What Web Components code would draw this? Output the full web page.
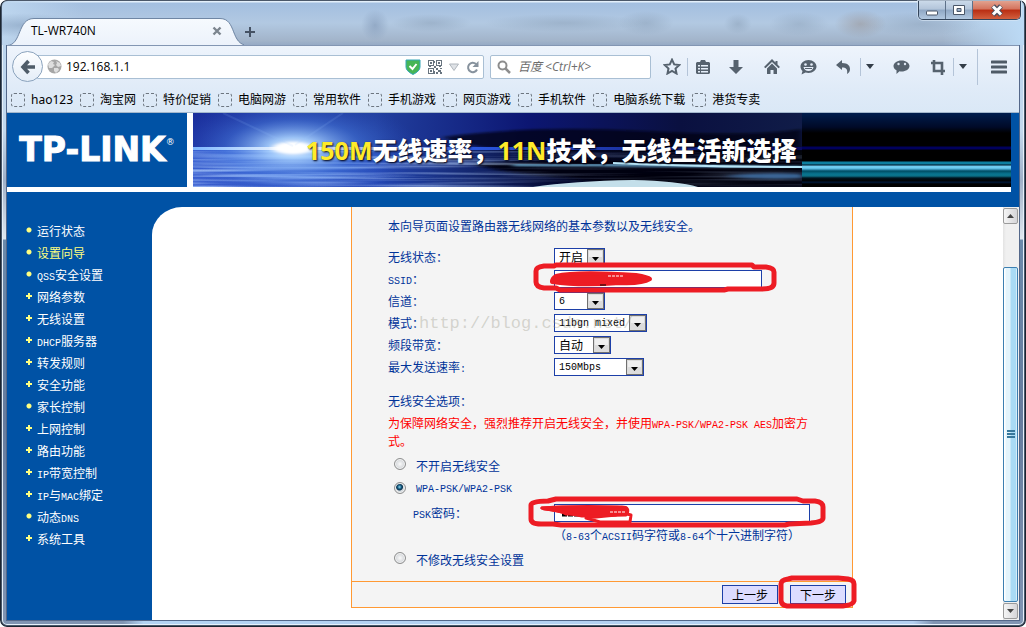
<!DOCTYPE html>
<html lang="zh-CN">
<head>
<meta charset="utf-8">
<title>TL-WR740N</title>
<style>
body{margin:0;font-family:"Noto Sans","Noto Sans CJK SC",sans-serif;font-size:12px;color:#000}
</style>
</head>
<body>
<browser-window>
  <window-titlebar slot="title"><browser-tab>TL-WR740N</browser-tab></window-titlebar>
  <nav-toolbar></nav-toolbar>
  <bookmark-bar></bookmark-bar>
  <router-banner></router-banner>
  <router-page>
    <router-menu slot="menu"></router-menu>
    <wizard-form></wizard-form>
    <scroll-rail slot="rail"></scroll-rail>
  </router-page>
</browser-window>
<script>
const define = (name, html) => {
  const t = document.createElement('template');
  t.innerHTML = '<style>*,::before{box-sizing:border-box}button{font:inherit;border:0;padding:0;margin:0;background:none;color:inherit}svg{display:block}</style>' + html;
  customElements.define(name, class extends HTMLElement {
    constructor() {
      super();
      this.attachShadow({mode: 'open'}).append(t.content.cloneNode(true));
    }
  });
};

define('browser-window', `
<style>
:host{display:flex;flex-direction:column;min-height:100vh;box-sizing:border-box;padding-bottom:7px;
 background:linear-gradient(90deg,#8195b3 12%,#b4d3f3 14%,#b4d0f0 89%,#8195b3 91%) bottom/100% 7px no-repeat,
 linear-gradient(#b5d1ee 0,#c3d9ee 130px,#9fb0c8 180px,#dfe8f0 239px,#6b8aab 240px,#667c9e 420px,#8195b3);
 box-shadow:inset 0 0 0 1px #1c2530,inset 0 0 0 2px #47566a,inset 0 0 0 3px #e6f1fa;border-radius:7px}
.inner{flex:1;display:flex;flex-direction:column;margin:0 7px;outline:1px solid #54688a}
</style>
<slot name="title"></slot><div class="inner"><slot></slot></div>`);

define('window-titlebar', `
<style>
:host{display:flex;position:relative;height:45px;box-sizing:border-box;padding-left:6px;padding-right:3px;margin:0 2px;border-radius:6px 6px 0 0;
 border-top:1px solid #4b586a;
 background:radial-gradient(ellipse 60px 12px at 2% 55%,#8ba5c3aa,transparent),
 radial-gradient(ellipse 14px 16px at 36.5% 55%,#8097b699,transparent),
 radial-gradient(ellipse 40px 9px at 42% 50%,#8ba0b888,transparent),
 radial-gradient(ellipse 80px 9px at 55% 50%,#8ba0b888,transparent),
 radial-gradient(ellipse 28px 12px at 63% 50%,#8ba0b888,transparent),
 radial-gradient(ellipse 14px 10px at 72% 52%,#8ba0b888,transparent),
 radial-gradient(ellipse 30px 12px at 78% 52%,#8ba0b877,transparent),
 radial-gradient(ellipse 26px 14px at 84% 52%,#958f9088,transparent),
 radial-gradient(ellipse 60px 12px at 90% 52%,#8ba0b888,transparent),
 linear-gradient(90deg,#bcd5ee,transparent 8% 92%,#bcdaf5),
 linear-gradient(#e3effa 0 1px,#a3bfe0 2px,#b2c9e2 50%,#a2b4ca 90%,#96aac5)}
.new{width:14px;height:14px;margin:24px 0 0;}
.ctl{display:flex;height:19px;margin-left:auto;border:1px solid #33445a;border-top:0;border-radius:0 0 5px 5px;overflow:hidden;box-shadow:0 0 0 1px #d7e6f4aa}
.ctl button{width:27px;display:grid;place-items:center;border-right:1px solid #5e7189;background:linear-gradient(#cbdaea,#b3c5da 45%,#8fa7c4 50%,#b2c8e0)}
.ctl button:last-child{width:47px;border:0;background:linear-gradient(#e2a28f,#d4735d 45%,#b92d12 50%,#d2603f)}
</style>
<slot></slot>
<button class="new" aria-label="新标签"><svg width="12" height="12" viewBox="0 0 12 12"><path d="M6 1v10M1 6h10" stroke="#455264" stroke-width="2"/></svg></button>
<div class="ctl">
<button aria-label="最小化"><svg width="14" height="13"><rect x="1.500" y="7" width="11" height="4" rx="1" fill="#fff" stroke="#4a5668"/></svg></button>
<button aria-label="最大化"><svg width="14" height="13"><path fill-rule="evenodd" d="M1.500 1.500h11v9h-11zM5 4.500v3h4v-3z" fill="#fff" stroke="#4a5668"/></svg></button>
<button aria-label="关闭"><svg width="14" height="13"><path d="M3 2l8 9M11 2l-8 9" stroke="#4a4f5e" stroke-width="5"/><path d="M3 2.500l8 8M11 2.500l-8 8" stroke="#fff" stroke-width="3"/></svg></button>
</div>`);

define('browser-tab', `
<style>
:host{display:flex;position:relative;flex:none;width:236px;height:28px;margin-top:16px;align-items:center;box-sizing:border-box;padding:0 22px 0 23px}
.shape{position:absolute;left:0;top:0}
span{position:relative;flex:1;line-height:18px;font-family:"Open Sans","Noto Sans",sans-serif}
button{position:relative;width:10px;height:10px}
</style>
<svg class="shape" width="236" height="28"><defs><linearGradient id="g" x2="0" y2="1"><stop stop-color="#f6fafe"/><stop offset="1" stop-color="#ecf2fb"/></linearGradient></defs>
<path d="M-1 28.500C14 28 9 1.500 26 1.500H212C229 1.500 222 28 240 28.500" fill="url(#g)" stroke="#6f86a4"/></svg>
<span><slot></slot></span>
<button aria-label="关闭标签"><svg width="10" height="10"><path d="M1.500 1.500l7 7M8.500 1.500l-7 7" stroke="#7c858f" stroke-width="2.400"/></svg></button>`);

define('nav-toolbar', `
<style>
:host{display:flex;align-items:center;height:42px;box-sizing:border-box;padding:0 0 0 5px;background:linear-gradient(#eef4fc,#e0ebf8);border-top:1px solid #8396b3}
.back{position:relative;z-index:1;flex:none;width:31px;height:31px;border:1px solid #8ba3bd;border-radius:50%;display:grid;place-items:center;background:linear-gradient(#fdfeff,#e4edf7)}
.url{flex:1;min-width:0;display:flex;align-items:center;height:24px;margin-left:-6px;padding:0 3px 0 9px;border:1px solid #a9bfd4;border-radius:0 2px 2px 0;background:#fff}
input{min-width:0;border:0;outline:0;padding:0;background:none;font:12px/18px "Open Sans","Noto Sans","Noto Sans CJK SC",sans-serif;color:#000}
.url input{flex:1;margin-left:4px}
.url svg{flex:none}
.st{display:flex;align-items:center;gap:7px}
.find{flex:none;width:161px;height:24px;margin:0 6px;display:flex;align-items:center;gap:7px;padding:0 6px;border:1px solid #a9bfd4;border-radius:2px;background:#fff}
.find input{flex:1;font-style:italic}
.find input::placeholder{color:#6d6d6d;opacity:1}
button.i{flex:none;width:36px;height:24px;display:grid;place-items:center;color:#56626e}
button.n{width:30px}
button.d{width:18px}
.bub{margin:0 4px}
i{flex:none;width:1px;height:18px;background:#b4c4d8}
i.tall{height:36px;margin-left:5px}
button.menu{width:41px}
</style>
<button class="back" aria-label="后退"><svg width="16" height="16" viewBox="0 0 16 16"><path d="M8.500 2L3 8l5.500 6M3 8h12" fill="none" stroke="#4f5c68" stroke-width="3.600"/></svg></button>
<div class="url">
<svg width="15" height="15" viewBox="0 0 15 15"><circle cx="7.500" cy="7.500" r="7" fill="#a6a6a6"/><path d="M1 5l3-3 3 1-1 2 2 1-3 3H2zM9 2l4 2 1 3-3 1-2-2 1-2zM7 9l4 0 1 2-3 3-2-2z" fill="#dedede"/></svg>
<input aria-label="地址" value="192.168.1.1">
<div class="st">
<svg width="16" height="16" viewBox="0 0 16 16"><path d="M1 1h14v7q0 4-7 7.500Q1 12 1 8z" fill="#46b556" stroke="#35a6b8"/><path d="M4.500 7l3 3 4-5" fill="none" stroke="#fff" stroke-width="2"/></svg>
<svg width="14" height="14" viewBox="0 0 14 14" fill="#68747f"><path fill-rule="evenodd" d="M0 0h6v6H0zM1 1v4h4V1zM8 0h6v6H8zM9 1v4h4V1zM0 8h6v6H0zM1 9v4h4V9z"/><path d="M2 2h2v2H2zM10 2h2v2h-2zM2 10h2v2H2zM8 8h2v2H8zM12 8h2v1h-2zM10 10h3v2h-3zM8 12h2v2H8zM12 12h2v2h-2zM6 6h2v2H6zM6 1h1v2H6zM6 11h1v3H6zM1 6h2v1H1zM11 6h2v1h-2z"/></svg>
<svg width="10" height="8"><path d="M0.500 1h9L5 7.500z" fill="#dfe2e6" stroke="#b0b6bd"/></svg>
<svg width="14" height="14" viewBox="0 0 14 14"><path d="M11 9.500A4.700 4.700 0 1 1 10 4" fill="none" stroke="#87929d" stroke-width="2"/><path d="M12.500 1v6h-6z" fill="#87929d"/></svg>
</div></div>
<div class="find"><svg width="14" height="14" viewBox="0 0 14 14"><circle cx="5.500" cy="5.500" r="4" fill="none" stroke="#8d8d8d" stroke-width="2"/><path d="M8.500 8.500l4.500 4.500" stroke="#8d8d8d" stroke-width="2.500"/></svg><input aria-label="搜索" placeholder="百度 &lt;Ctrl+K&gt;"></div>
<button class="i n" aria-label="收藏"><svg width="18" height="17" viewBox="0 0 18 17"><path d="M9 1.700l2.200 4.700 5.100.6-3.800 3.500 1 5-4.500-2.500-4.500 2.500 1-5L1.700 7l5.100-.6z" fill="none" stroke="currentColor" stroke-width="2"/></svg></button><i></i>
<button class="i n" aria-label="书签"><svg width="16" height="16" viewBox="0 0 16 16"><path fill-rule="evenodd" fill="currentColor" d="M2 3h3l1-2h4l1 2h3l1 1v10l-1 1H2l-1-1V4zM3 6v1.500h2V6zM6 6v1.500h7V6zM3 9v1.500h2V9zM6 9v1.500h7V9zM3 12v1.500h2V12zM6 12v1.500h7V12z"/></svg></button>
<button class="i" aria-label="下载"><svg width="16" height="16" viewBox="0 0 16 16"><path d="M5.500 1h5v7H15l-7 7-7-7h4.500z" fill="currentColor"/></svg></button>
<button class="i" aria-label="主页"><svg width="16" height="16" viewBox="0 0 16 16" fill="currentColor"><path d="M8 0L0 8l1.500 1.300L8 3l6.500 6.300L16 8l-2.500-2.500V2h-2v1.500z"/><path d="M8 4.500L3 9.500V15h3.500v-4h3v4H13V9.500z"/></svg></button>
<button class="i" aria-label="表情"><svg width="17" height="16" viewBox="0 0 17 16"><path d="M8.500 1C13 1 16.500 4 16.500 7.500S13 14 8.500 14l-3-.5-4 2 1-3.500C1 10.500.5 9 .5 7.500.5 4 4 1 8.500 1z" fill="currentColor"/><circle cx="5.500" cy="5.500" r="1.300" fill="#e6eef9"/><circle cx="11.500" cy="5.500" r="1.300" fill="#e6eef9"/><path d="M3.500 8h10q-1 4-5 4t-5-4z" fill="#e6eef9"/><path d="M5 9.500h7" stroke="currentColor"/></svg></button>
<button class="i" style="width:34px" aria-label="撤销"><svg width="16" height="16" viewBox="0 0 16 16"><path d="M1 6l6-5v3c6 0 8 3 8 6 0 2-1 4-3 5 1-5-1-6.500-5-6.500V11z" fill="currentColor"/></svg></button><i></i>
<button class="i d" aria-label="撤销选项"><svg width="8" height="5"><path d="M0 0h8L4 5z" fill="#333d48"/></svg></button>
<button class="i bub" aria-label="消息"><svg width="17" height="16" viewBox="0 0 17 16"><path d="M8.500 1.500C13 1.500 16.500 4 16.500 7S13 12.500 8.500 12.500q-1 0-2-.2L3.500 15V11.300C1.500 10.300.5 8.800.5 7 .5 4 4 1.500 8.500 1.500z" fill="currentColor"/><circle cx="5.500" cy="5" r="1.200" fill="#dfe8f3"/><circle cx="12" cy="5" r="1.200" fill="#dfe8f3"/></svg></button>
<button class="i n" aria-label="截图"><svg width="16" height="16" viewBox="0 0 16 16"><path d="M1 4h11v12M4 1v11h11" fill="none" stroke="currentColor" stroke-width="2.600"/></svg></button><i></i>
<button class="i d" aria-label="截图选项"><svg width="8" height="5"><path d="M0 0h8L4 5z" fill="#333d48"/></svg></button><i class="tall"></i>
<button class="i menu" aria-label="菜单"><svg width="16" height="14"><path d="M1 2h14M1 7h14M1 12h14" stroke="#4f5b67" stroke-width="3" stroke-linecap="round"/></svg></button>`);

define('bookmark-bar', `
<style>
:host{display:flex;align-items:center;gap:7px;height:26px;box-sizing:border-box;padding:0 4px;background:linear-gradient(#e0ebf8,#dae8f6);border-bottom:1px solid #a3b7cc;white-space:nowrap}
a{display:flex;align-items:center;gap:6px;color:#000;text-decoration:none;line-height:20px}
a::before{content:"";width:14px;height:14px;border:1px dashed #6d7680;border-radius:3px}
</style>
<a href="#">hao123</a><a href="#">淘宝网</a><a href="#">特价促销</a><a href="#">电脑网游</a><a href="#">常用软件</a><a href="#">手机游戏</a><a href="#">网页游戏</a><a href="#">手机软件</a><a href="#">电脑系统下载</a><a href="#">港货专卖</a>`);

define('router-banner', `
<style>
:host{display:flex;background:#fff;border-right:8px solid #0052a5}
.logo{flex:none;width:180px;height:74px;display:flex;align-items:center;justify-content:center;background:#0052a5;color:#fff;font:bold 33px/40px "DejaVu Sans",sans-serif}
.logo b{-webkit-text-stroke:1px #fff}
sup{font-size:9px;line-height:10px;align-self:flex-start;margin-top:24px;font-weight:normal}
.ad{flex:1;position:relative;height:74px;margin:0 0 5px 6px;padding-left:113px;overflow:hidden;
background:linear-gradient(#001d4d 0,#000a28 14px,#000 20px 33px,#00005c 34px 36px,#000 37px 48px,#0d7f9f 49px 51px,#012 52px,#6fcdf0 53px 55px,#49a9d0 56px,#004c63 58px,#087590 61px,#0b6f86 63px,#001520 65px,#000 68px,#001a3d 69px,#000 71px)}
.ad svg{position:absolute;left:0;top:0}
p{position:relative;margin:0;white-space:nowrap;font:900 25px/72px "Noto Sans CJK SC",sans-serif;color:#fff;text-shadow:1px 1px 2px #001}
em{font:bold 25px/72px "Open Sans",sans-serif;color:#ffeb2a}
</style>
<div class="logo"><b>TP-LINK</b><sup>®</sup></div>
<div class="ad">
<svg width="609" height="74" viewBox="0 0 609 74"><defs>
<linearGradient id="s"><stop stop-color="#1b2f9c"/><stop offset=".3" stop-color="#22409f"/><stop offset=".55" stop-color="#0c1672"/><stop offset=".8" stop-color="#0a1040"/><stop offset="1" stop-color="#101c48"/></linearGradient>
<linearGradient id="w"><stop stop-color="#3a5fd0"/><stop offset=".3" stop-color="#2447b4"/><stop offset=".6" stop-color="#050a30"/><stop offset="1" stop-color="#02040c"/></linearGradient>
<radialGradient id="f"><stop stop-color="#fff"/><stop offset=".2" stop-color="#a9d2ff" stop-opacity=".9"/><stop offset=".55" stop-color="#4d84e8" stop-opacity=".45"/><stop offset="1" stop-color="#2b51c4" stop-opacity="0"/></radialGradient>
<linearGradient id="l"><stop stop-color="#7fb8ff"/><stop offset=".17" stop-color="#fff"/><stop offset=".45" stop-color="#2b58e0"/><stop offset="1" stop-color="#0a0a60"/></linearGradient>
<linearGradient id="v"><stop stop-color="#fff"/><stop offset=".3" stop-color="#bbb"/><stop offset=".6" stop-color="#444"/><stop offset="1" stop-color="#333"/></linearGradient>
<mask id="k"><rect width="609" height="74" fill="url(#v)"/></mask>
<filter id="b" x="-10%" width="120%" y="-50%" height="200%"><feGaussianBlur stdDeviation="3 1"/></filter>
<filter id="r" x="0" width="100%" y="0" height="100%"><feTurbulence type="fractalNoise" baseFrequency=".006 .3" numOctaves="2" seed="4"/><feColorMatrix values="0 0 0 0 .5  0 0 0 0 .68  0 0 0 0 1  2.600 0 0 0 -1.050"/></filter>
</defs>
<rect width="609" height="74" fill="url(#s)"/>
<rect y="36" width="609" height="38" fill="url(#w)"/>
<g filter="url(#b)" fill="#00020e">
<path d="M250 24q90-12 200-6t159-2v22H330q-60-4-80-14z" opacity=".75"/>
<path d="M280 51q120-8 329-3v12q-70 4-120 10t-120-6q-60-4-89-13z" opacity=".9"/>
<path d="M420 64q90-9 189-8v18H440z"/>
</g>
<g mask="url(#k)"><rect y="38" width="609" height="36" filter="url(#r)"/></g>
<ellipse cx="100" cy="35" rx="125" ry="52" fill="url(#f)"/>
<rect y="34" width="609" height="3" fill="url(#l)"/>
<ellipse cx="100" cy="35" rx="20" ry="6" fill="#fff" filter="url(#b)"/>
<path d="M30 0l70 33M150 0l-48 32" stroke="#9cc6ff" opacity=".12" stroke-width="2"/>
<path d="M320 52h80l209 2" stroke="#6db4dd" stroke-width="2" fill="none" filter="url(#b)"/>
<path d="M420 50q90 4 189 4" stroke="#b6e4f7" stroke-width="2" fill="none"/>
<path d="M340 74q40-6 100-7 45 1 65 7z" fill="#c4dfea"/>
<path d="M530 63q40-4 79-2v4q-40 2-79-2z" fill="#3a6595" filter="url(#b)"/>
</svg>
<p><em>150M</em>无线速率，<em>11N</em>技术，无线生活新选择</p>
</div>`);

define('router-page', `
<style>
:host{flex:1;display:flex;background:#0052a5;padding-top:15px}
main{flex:1;display:flex;align-items:flex-start;justify-content:flex-end;background:#fff;border-top-left-radius:30px 28px;padding:0 150px 12px 20px}
</style>
<slot name="menu"></slot><main><slot></slot></main><slot name="rail"></slot>`);

define('router-menu', `
<style>
:host{flex:none;width:145px;box-sizing:border-box;padding:13px 0 0 19px;font-family:"Noto Sans CJK SC",sans-serif}
ul{list-style:none;margin:0;padding:0}
li{display:flex;align-items:center;height:22px;gap:5px}
li::before{content:"";flex:none;width:6px;height:6px;margin-bottom:3px;background:linear-gradient(#ffff80,#ffff80) center/6px 2px no-repeat,linear-gradient(#ffff80,#ffff80) center/2px 6px no-repeat}
li.dot::before{background:radial-gradient(#ffff80 2px,transparent 3px)}
a{color:#fff;text-decoration:none;line-height:22px;white-space:nowrap}
a.on{color:#ffff80}
span{font:10px/10px "Liberation Mono",monospace}
</style>
<ul>
<li class="dot"><a href="#">运行状态</a></li><li class="dot"><a class="on" href="#">设置向导</a></li><li class="dot"><a href="#"><span>QSS</span>安全设置</a></li>
<li><a href="#">网络参数</a></li><li><a href="#">无线设置</a></li><li><a href="#"><span>DHCP</span>服务器</a></li><li><a href="#">转发规则</a></li><li><a href="#">安全功能</a></li>
<li class="dot"><a href="#">家长控制</a></li><li><a href="#">上网控制</a></li><li><a href="#">路由功能</a></li><li><a href="#"><span>IP</span>带宽控制</a></li><li><a href="#"><span>IP</span>与<span>MAC</span>绑定</a></li>
<li class="dot"><a href="#">动态<span>DNS</span></a></li><li><a href="#">系统工具</a></li>
</ul>`);

define('wizard-form', `
<style>
:host{display:block;position:relative;flex:none;width:502px;box-sizing:border-box;background:#f4f4f4;border:1px solid #ff9933;border-top:0;color:#003399;font:12px/22px "Noto Sans CJK SC",sans-serif}
.body{padding:8px 36px 9px}
p{margin:0}
.m{font-family:"Liberation Mono",monospace;font-size:10px}
span.m{line-height:10px}
.grid{display:grid;grid-template-columns:166px 1fr;grid-auto-rows:22px;margin-top:9px}
.cell{position:relative;display:flex;align-items:center}
select,input.t{height:18px;border:1px solid #1c3fa8;border-radius:0;background:#fff;color:#000;margin:0;padding:0 4px;font:12px/16px "Noto Sans CJK SC",sans-serif}
select.m{padding-top:2px;font:10px/14px "Liberation Mono",monospace}
select{appearance:none;width:51px;background:#fff url("data:image/svg+xml,%3Csvg xmlns='http://www.w3.org/2000/svg' width='17' height='16'%3E%3Crect x='.5' y='.5' width='16' height='15' fill='%23dcdcdc' stroke='%23707070'/%3E%3Cpath d='M2 2h13v6H2z' fill='%23efefef'/%3E%3Cpath d='M5 8h7l-3.500 4z'/%3E%3C/svg%3E") right center no-repeat}
select.w93{width:93px}select.w57{width:57px}select.w90{width:90px}
.ssid{width:208px}.psk{width:256px}
h3{margin:12px 0 0;font:inherit}
.warn{color:#f00;line-height:18px;margin-top:2px;width:424px}
.opts{margin-top:4px}
.r{display:flex;align-items:center;height:24px;padding-left:6px;gap:10px}
.r.last{margin-top:2px}
.r label{line-height:24px}
.r input{appearance:none;width:12px;height:12px;margin:0 0 4px;border:1px solid #8e8f8f;border-radius:50%;background:radial-gradient(#fafafa,#cfd2d6 5px);box-shadow:inset 0 0 0 1px #f4f4f4}
.r input:checked{background:radial-gradient(circle at 45% 40%,#8fdcf5 0,#14577c 2px,#0b3350 3px,#d5dade 4px)}
.opts .grid{margin:0}
.opts .grid label{padding-left:25px}
.hint{grid-column:2;white-space:nowrap}
footer{display:flex;justify-content:flex-end;gap:12px;height:26px;padding:3px 6px;border-top:1px solid #ff9933}
footer button{width:56px;height:19px;border:1px solid #1c3fa8;background:#dcdcff;color:#000;font:12px/17px "Noto Sans CJK SC",sans-serif}
.next{position:relative;display:block;height:19px}
.next button{display:block}
.mark{position:absolute;pointer-events:none;z-index:2;fill:none;stroke:#ed1c24;stroke-width:5;stroke-linejoin:round}
.mark1{left:-22px;top:-6px}.mark2{left:-28px;top:-6px}.mark3{left:-12px;top:-10px}
.wm{position:absolute;left:67px;top:105px;font:17px/24px "Liberation Mono",monospace;color:#8f8f7c55;pointer-events:none}
</style>
<form class="body" id="f">
<p>本向导页面设置路由器无线网络的基本参数以及无线安全。</p>
<div class="grid">
<label for="st">无线状态：</label><div class="cell"><select id="st"><option>开启</option></select></div>
<label for="ss"><span class="m">SSID</span>：</label><div class="cell"><input class="t ssid" id="ss" type="text">
<svg class="mark mark1" width="246" height="32"><path d="M12 4Q4 5 4 9v11q0 5 8 6h12l4 2h164l4-1h34q12 0 12-6V10q0-4-8-5h-12l-2-2H24l-2 1z"/><path d="M24 14q20-5 80-1 12 2 14 4-8 5-30 4-40 3-68-1 0-4 4-6z" fill="#ed1c24" stroke-width="4"/><path d="M68 23h6" stroke="#000" stroke-width="1"/><path d="M76 14h16" stroke="#fff" stroke-width="1" stroke-dasharray="3 1"/></svg></div>
<label for="ch">信道：</label><div class="cell"><select id="ch" class="m"><option>6</option></select></div>
<label for="mo">模式：</label><div class="cell"><select id="mo" class="m w93"><option>11bgn mixed</option></select></div>
<label for="bw">频段带宽：</label><div class="cell"><select id="bw" class="w57"><option>自动</option></select></div>
<label for="sp">最大发送速率<span class="m">:</span></label><div class="cell"><select id="sp" class="m w90"><option>150Mbps</option></select></div>
</div>
<h3>无线安全选项：</h3>
<p class="warn">为保障网络安全，强烈推荐开启无线安全，并使用<span class="m">WPA-PSK/WPA2-PSK AES</span>加密方式。</p>
<div class="opts">
<div class="r"><input type="radio" name="s" id="r1"><label for="r1">不开启无线安全</label></div>
<div class="r"><input type="radio" name="s" id="r2" checked><label for="r2" class="m">WPA-PSK/WPA2-PSK</label></div>
<div class="grid">
<label for="pk"><span class="m">PSK</span>密码：</label><div class="cell"><input class="t psk" id="pk" type="text">
<svg class="mark mark2" width="303" height="37"><path d="M22 5Q5 5 5 9v14q0 5 10 5h12l8 1h224l4-1 22-1q12-1 12-5V11q0-5-8-6h-12l-6-2H30z"/><path d="M36 18h20" stroke="#000" stroke-width="5" stroke-dasharray="5 1"/><path d="M16 12l20-1h60q8 0 5 7l4 1-1 7H74l-14-4 30-3-50-1q-6-4-22-5z" stroke-width="3"/><path d="M16 12q50-3 84 0v7l-44 1-20-4z" fill="#ed1c24" stroke-width="3"/><path d="M84 16h15" stroke="#fff" stroke-width="1" stroke-dasharray="3 1"/></svg></div>
<div class="hint">（<span class="m">8-63</span>个<span class="m">ACSII</span>码字符或<span class="m">8-64</span>个十六进制字符）</div>
</div>
<div class="r last"><input type="radio" name="s" id="r3"><label for="r3">不修改无线安全设置</label></div>
</div>
</form>
<footer><button type="button">上一步</button><div class="next"><button type="button">下一步</button>
<svg class="mark mark3" width="82" height="35"><path d="M10 4Q3 5 3 9v16q0 5 6 6l56 0q10-1 11-5V9q0-4-6-5l-10-1H14z"/></svg></div></footer>
<span class="wm">http://blog.csdn.net/</span>`);

define('scroll-rail', `
<style>
:host{flex:none;width:15px;display:flex;flex-direction:column;background:linear-gradient(90deg,#e3e3e3,#f0f0f0 3px);padding:1px 1px 1px 0}
button{flex:none;height:16px;display:grid;place-items:center;border:1px solid #9b9b9b;border-radius:2px;background:linear-gradient(90deg,#f5f5f5,#d5d5d8)}
.thumb{flex:1;margin:43px 0 1px;display:grid;place-items:center;border:1px solid #3c7fb1;border-radius:2px;background:linear-gradient(90deg,#fff 1px,#e3f4fc 2px 6px,#a9dbf5 7px 12px,#fff 13px)}
</style>
<button aria-label="向上"><svg width="7" height="4"><path d="M0 4L3.500 0 7 4z" fill="#444"/></svg></button>
<div class="thumb"><svg width="8" height="9"><path d="M0 1h8M0 4h8M0 7h8" stroke="#37789c" stroke-width="2"/></svg></div>
<button aria-label="向下"><svg width="7" height="4"><path d="M0 0h7L3.500 4z" fill="#444"/></svg></button>`);
</script>
</body>
</html>
